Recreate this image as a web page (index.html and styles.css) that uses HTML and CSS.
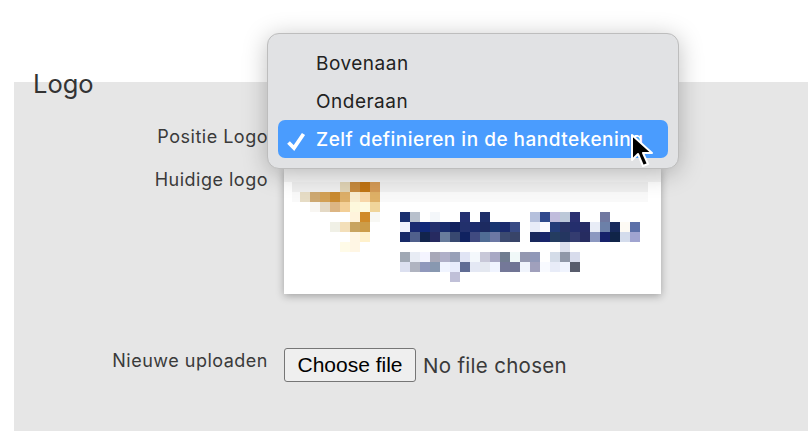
FILE: index.html
```html
<!DOCTYPE html>
<html>
<head>
    <meta charset="utf-8" />
    <title>Logo</title>
    <link rel="stylesheet" href="styles.css">
</head>
<body>
    <div class="paneel">
        <h2 class="titel">Logo</h2>
        <div class="rij rij-positie">
            <label class="label">Positie Logo</label>
            <div class="veld"></div>
        </div>
        <div class="rij rij-huidig">
            <label class="label">Huidige logo</label>
            <div class="veld">
                <svg class="logo" width="377" height="126" viewBox="284 168 377 126" shape-rendering="crispEdges">
                    <rect x="284" y="168" width="377" height="126" fill="#fff"/>
                    <rect x="284" y="168" width="377" height="14" fill="#f4f4f4"/>
                    <g id="rij0">
                        <rect x="292" y="182" width="356" height="10" fill="#efefef"/>
                        <rect x="340" y="182" width="10" height="10" fill="#e0d3b5"/>
                        <rect x="350" y="182" width="10" height="10" fill="#c68a3e"/>
                        <rect x="360" y="182" width="10" height="10" fill="#c07414"/>
                        <rect x="370" y="182" width="10" height="10" fill="#d49a55"/>
                    </g>
                    <g>
                        <rect x="292" y="192" width="356" height="10" fill="#f9f9f9"/>
                        <rect x="300" y="192" width="10" height="10" fill="#e6dcc5"/>
                        <rect x="310" y="192" width="10" height="10" fill="#cda871"/>
                        <rect x="320" y="192" width="10" height="10" fill="#d2a055"/>
                        <rect x="330" y="192" width="10" height="10" fill="#c98a30"/>
                        <rect x="340" y="192" width="10" height="10" fill="#dcae68"/>
                        <rect x="350" y="192" width="10" height="10" fill="#f8eccf"/>
                        <rect x="360" y="192" width="10" height="10" fill="#f7d6a8"/>
                        <rect x="370" y="192" width="10" height="10" fill="#deb066"/>
                    </g>
                    <g>
                        <rect x="310" y="202" width="10" height="10" fill="#f8f6f2"/>
                        <rect x="320" y="202" width="10" height="10" fill="#e4d9c5"/>
                        <rect x="330" y="202" width="10" height="10" fill="#dcb583"/>
                        <rect x="340" y="202" width="10" height="10" fill="#f3cf97"/>
                        <rect x="350" y="202" width="10" height="10" fill="#fdf8dc"/>
                        <rect x="360" y="202" width="10" height="10" fill="#fefae0"/>
                        <rect x="370" y="202" width="10" height="10" fill="#f0d59a"/>
                    </g>
                    <g>
                        <rect x="350" y="212" width="10" height="10" fill="#fff4dc"/>
                        <rect x="360" y="212" width="10" height="10" fill="#d08a28"/>
                        <rect x="370" y="212" width="10" height="10" fill="#f8f8f4"/>
                        <rect x="400" y="212" width="10" height="10" fill="#1a2f6e"/>
                        <rect x="410" y="212" width="10" height="10" fill="#b8c0cc"/>
                        <rect x="430" y="212" width="10" height="10" fill="#f4f7fa"/>
                        <rect x="460" y="212" width="10" height="10" fill="#243070"/>
                        <rect x="480" y="212" width="10" height="10" fill="#1e2e68"/>
                        <rect x="530" y="212" width="10" height="10" fill="#b5c0dc"/>
                        <rect x="540" y="212" width="10" height="10" fill="#30488c"/>
                        <rect x="550" y="212" width="10" height="10" fill="#c0bcdc"/>
                        <rect x="560" y="212" width="10" height="10" fill="#bcc8d8"/>
                        <rect x="570" y="212" width="10" height="10" fill="#2a3070"/>
                        <rect x="600" y="212" width="10" height="10" fill="#7078a0"/>
                    </g>
                    <g>
                        <rect x="330" y="222" width="10" height="10" fill="#f0f0e6"/>
                        <rect x="340" y="222" width="10" height="10" fill="#f3dfba"/>
                        <rect x="350" y="222" width="10" height="10" fill="#c8a460"/>
                        <rect x="360" y="222" width="10" height="10" fill="#cc9c48"/>
                        <rect x="400" y="222" width="10" height="10" fill="#f0f2fc"/>
                        <rect x="410" y="222" width="10" height="10" fill="#1a2a70"/>
                        <rect x="420" y="222" width="10" height="10" fill="#102878"/>
                        <rect x="430" y="222" width="10" height="10" fill="#24306c"/>
                        <rect x="440" y="222" width="10" height="10" fill="#182c6c"/>
                        <rect x="450" y="222" width="10" height="10" fill="#12225e"/>
                        <rect x="460" y="222" width="10" height="10" fill="#22306c"/>
                        <rect x="470" y="222" width="10" height="10" fill="#1c2c6c"/>
                        <rect x="480" y="222" width="10" height="10" fill="#1c2a60"/>
                        <rect x="490" y="222" width="10" height="10" fill="#183670"/>
                        <rect x="500" y="222" width="10" height="10" fill="#1a2a6c"/>
                        <rect x="510" y="222" width="10" height="10" fill="#384a84"/>
                        <rect x="530" y="222" width="10" height="10" fill="#e8ecf8"/>
                        <rect x="540" y="222" width="10" height="10" fill="#fbf8fe"/>
                        <rect x="550" y="222" width="10" height="10" fill="#243c78"/>
                        <rect x="560" y="222" width="10" height="10" fill="#283464"/>
                        <rect x="570" y="222" width="10" height="10" fill="#242e6c"/>
                        <rect x="580" y="222" width="10" height="10" fill="#262c64"/>
                        <rect x="590" y="222" width="10" height="10" fill="#e8ecf6"/>
                        <rect x="600" y="222" width="10" height="10" fill="#6c80a8"/>
                        <rect x="610" y="222" width="10" height="10" fill="#182a5c"/>
                        <rect x="620" y="222" width="10" height="10" fill="#fdfaf4"/>
                        <rect x="630" y="222" width="10" height="10" fill="#5c70a8"/>
                    </g>
                    <g>
                        <rect x="350" y="232" width="10" height="10" fill="#fff6e4"/>
                        <rect x="360" y="232" width="10" height="10" fill="#fff1cc"/>
                        <rect x="400" y="232" width="10" height="10" fill="#182a68"/>
                        <rect x="410" y="232" width="10" height="10" fill="#50608c"/>
                        <rect x="420" y="232" width="10" height="10" fill="#12244c"/>
                        <rect x="430" y="232" width="10" height="10" fill="#262a60"/>
                        <rect x="440" y="232" width="10" height="10" fill="#687c9c"/>
                        <rect x="450" y="232" width="10" height="10" fill="#384870"/>
                        <rect x="460" y="232" width="10" height="10" fill="#102260"/>
                        <rect x="470" y="232" width="10" height="10" fill="#404a80"/>
                        <rect x="480" y="232" width="10" height="10" fill="#506c94"/>
                        <rect x="490" y="232" width="10" height="10" fill="#6c78a4"/>
                        <rect x="500" y="232" width="10" height="10" fill="#3c4a70"/>
                        <rect x="510" y="232" width="10" height="10" fill="#384468"/>
                        <rect x="530" y="232" width="10" height="10" fill="#18285c"/>
                        <rect x="540" y="232" width="10" height="10" fill="#18246a"/>
                        <rect x="550" y="232" width="10" height="10" fill="#243c60"/>
                        <rect x="560" y="232" width="10" height="10" fill="#243660"/>
                        <rect x="570" y="232" width="10" height="10" fill="#343c70"/>
                        <rect x="580" y="232" width="10" height="10" fill="#262c60"/>
                        <rect x="590" y="232" width="10" height="10" fill="#8c98c0"/>
                        <rect x="600" y="232" width="10" height="10" fill="#16226a"/>
                        <rect x="610" y="232" width="10" height="10" fill="#102448"/>
                        <rect x="620" y="232" width="10" height="10" fill="#d4dcec"/>
                        <rect x="630" y="232" width="10" height="10" fill="#a0a4d0"/>
                    </g>
                    <g>
                        <rect x="340" y="242" width="10" height="10" fill="#fffbe8"/>
                        <rect x="350" y="242" width="10" height="10" fill="#fff6e4"/>
                        <rect x="560" y="242" width="10" height="10" fill="#dce0ec"/>
                    </g>
                    <g>
                        <rect x="400" y="252" width="10" height="10" fill="#a0a8b4"/>
                        <rect x="410" y="252" width="10" height="10" fill="#e8ecf4"/>
                        <rect x="420" y="252" width="10" height="10" fill="#f4f4ff"/>
                        <rect x="430" y="252" width="10" height="10" fill="#a8a8b8"/>
                        <rect x="440" y="252" width="10" height="10" fill="#b0b0c8"/>
                        <rect x="450" y="252" width="10" height="10" fill="#98a0b8"/>
                        <rect x="460" y="252" width="10" height="10" fill="#e0e4f4"/>
                        <rect x="470" y="252" width="10" height="10" fill="#f4f8fc"/>
                        <rect x="480" y="252" width="10" height="10" fill="#c8c8d8"/>
                        <rect x="490" y="252" width="10" height="10" fill="#a8a8c4"/>
                        <rect x="500" y="252" width="10" height="10" fill="#707c90"/>
                        <rect x="510" y="252" width="10" height="10" fill="#f0f8f8"/>
                        <rect x="520" y="252" width="10" height="10" fill="#9498b0"/>
                        <rect x="530" y="252" width="10" height="10" fill="#9098b8"/>
                        <rect x="550" y="252" width="10" height="10" fill="#d4dce8"/>
                        <rect x="560" y="252" width="10" height="10" fill="#9098a8"/>
                        <rect x="570" y="252" width="10" height="10" fill="#d8dcec"/>
                    </g>
                    <g>
                        <rect x="400" y="262" width="10" height="10" fill="#dce0f0"/>
                        <rect x="410" y="262" width="10" height="10" fill="#b0b4c0"/>
                        <rect x="420" y="262" width="10" height="10" fill="#9098bc"/>
                        <rect x="430" y="262" width="10" height="10" fill="#8898b0"/>
                        <rect x="440" y="262" width="10" height="10" fill="#f0f4ff"/>
                        <rect x="450" y="262" width="10" height="10" fill="#e8ecfc"/>
                        <rect x="460" y="262" width="10" height="10" fill="#606c94"/>
                        <rect x="470" y="262" width="10" height="10" fill="#e4e8f4"/>
                        <rect x="480" y="262" width="10" height="10" fill="#e4e8f0"/>
                        <rect x="490" y="262" width="10" height="10" fill="#f0f4ff"/>
                        <rect x="500" y="262" width="10" height="10" fill="#747898"/>
                        <rect x="510" y="262" width="10" height="10" fill="#707494"/>
                        <rect x="520" y="262" width="10" height="10" fill="#f0f4fc"/>
                        <rect x="530" y="262" width="10" height="10" fill="#a0a0bc"/>
                        <rect x="540" y="262" width="10" height="10" fill="#f8faff"/>
                        <rect x="550" y="262" width="10" height="10" fill="#e8ecf8"/>
                        <rect x="560" y="262" width="10" height="10" fill="#f0f4fe"/>
                        <rect x="570" y="262" width="10" height="10" fill="#585c6c"/>
                    </g>
                    <rect x="450" y="272" width="10" height="10" fill="#c0c0d8"/>
                </svg>
            </div>
        </div>
        <div class="rij rij-upload">
            <label class="label">Nieuwe uploaden</label>
            <div class="veld bestand">
                <button class="kies">Choose file</button>
                <span class="geen">No file chosen</span>
            </div>
        </div>
    </div>

    <div class="menu">
        <div class="optie">Bovenaan</div>
        <div class="optie">Onderaan</div>
        <div class="optie actief">
            <svg class="vink" width="22" height="22" viewBox="0 0 22 22">
                <path d="M3.5 11.5 L9 17 L18.5 3" fill="none" stroke="#fff" stroke-width="3.8"/>
            </svg>
            Zelf definieren in de handtekening
        </div>
    </div>

    <svg class="cursor" width="26" height="36" viewBox="0 0 26 36">
        <path d="M2 2 V27 L8 21 L13 33 L18 31 L13 20 H22 Z" fill="#000" stroke="#fff" stroke-width="2" stroke-linejoin="round"/>
    </svg>
</body>
</html>
```

FILE: styles.css
```css
* {
    margin: 0;
    padding: 0;
    box-sizing: border-box;
}

html, body {
    height: 100%;
    overflow: hidden;
}

body {
    background: white;
    padding: 82px 0 0 14px;
    font-family: Inter, "Liberation Sans", sans-serif;
    color: #333;
}

.paneel {
    display: flow-root;
    height: 349px;
    background: #e6e6e6;
}

.titel {
    font-size: 25.5px;
    font-weight: 400;
    line-height: 28px;
    margin: -12px 0 0 19px;
    color: #333;
}

.rij {
    display: flex;
    gap: 16px;
}

.label {
    width: 254px;
    text-align: right;
    font-size: 18px;
    letter-spacing: 0.5px;
    line-height: 22px;
    color: #3a3a3a;
}

.rij-positie {
    height: 42px;
    margin-top: 28px;
}

.rij-huidig {
    height: 126px;
}

.rij-huidig .label,
.rij-upload .label {
    margin-top: 1px;
}

.rij-upload {
    margin-top: 55px;
}

.logo {
    display: block;
    box-shadow: 0 2px 8px rgba(0, 0, 0, 0.3);
}

.bestand {
    display: flex;
    align-items: center;
    gap: 7px;
    margin-top: -1px;
}

.kies {
    width: 132px;
    height: 34px;
    font-family: "Liberation Sans", sans-serif;
    font-size: 21px;
    color: #000;
    background: #efefef;
    border: 1px solid #767676;
    border-radius: 3px;
}

.geen {
    font-size: 20.5px;
    letter-spacing: 0.3px;
    color: #3a3a3a;
}

.menu {
    position: absolute;
    left: 267px;
    top: 33px;
    width: 412px;
    height: 136px;
    padding: 10px;
    background: #e1e2e4;
    border: 1px solid #bdbdbd;
    border-radius: 12px;
    box-shadow: 0 4px 24px rgba(0, 0, 0, 0.25);
}

.optie {
    height: 38px;
    line-height: 40px;
    padding-left: 38px;
    font-size: 19px;
    letter-spacing: 0.5px;
    color: #222;
    white-space: nowrap;
}

.actief {
    position: relative;
    background: #4a9cfe;
    border-radius: 7px;
    color: white;
    font-weight: 500;
}

.vink {
    position: absolute;
    left: 7px;
    top: 11px;
}

.cursor {
    position: absolute;
    left: 630px;
    top: 133px;
}
```
